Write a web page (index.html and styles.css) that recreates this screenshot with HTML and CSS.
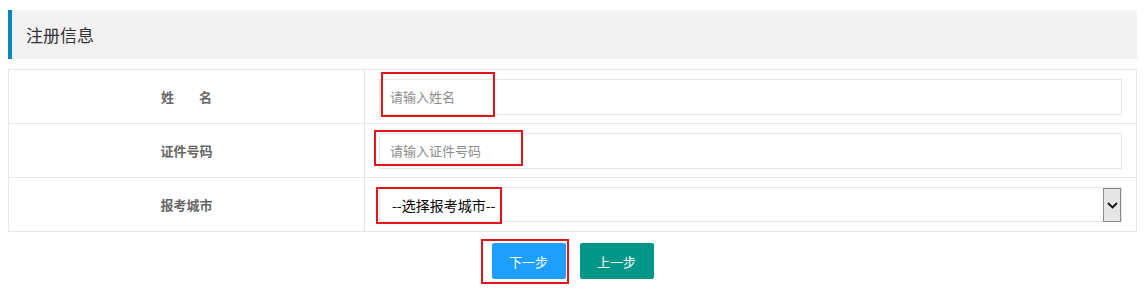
FILE: index.html
```html
<!DOCTYPE html>
<html>
<head>
  <meta charset="UTF-8">
  <title>注册信息</title>
  <link rel="stylesheet" href="styles.css">
</head>
<body>
  <div class="page">
    <div class="quote">注册信息</div>

    <table class="form-table">
      <tr>
        <th><span class="spread">姓名</span></th>
        <td>
          <input class="text-input" type="text" placeholder="请输入姓名">
          <span class="mark mark-name"></span>
        </td>
      </tr>
      <tr>
        <th>证件号码</th>
        <td>
          <input class="text-input" type="text" placeholder="请输入证件号码">
          <span class="mark mark-id"></span>
        </td>
      </tr>
      <tr>
        <th>报考城市</th>
        <td>
          <div class="select-wrap">
            <select class="city-select">
              <option>--选择报考城市--</option>
            </select>
            <span class="select-arrow">
              <svg width="11" height="7" viewBox="0 0 11 7"><path d="M1 1l4.5 4.5L10 1" fill="none" stroke="#111" stroke-width="1.8"/></svg>
            </span>
          </div>
          <span class="mark mark-city"></span>
        </td>
      </tr>
    </table>

    <div class="actions">
      <span class="btn-wrap">
        <button class="btn btn-next">下一步</button>
        <span class="mark mark-btn"></span>
      </span>
      <button class="btn btn-prev">上一步</button>
    </div>
  </div>
</body>
</html>
```

FILE: styles.css
```css
body {
  margin: 0;
  font-family: "Noto Sans CJK SC", "Liberation Sans", sans-serif;
  font-size: 13px;
  color: #666;
  background-color: #fff;
}
.page {
  padding: 10px 8px;
}
.quote {
  height: 49px;
  line-height: 49px;
  padding-left: 14px;
  border-left: 4px solid #0a86c6;
  background-color: #f2f2f2;
  color: #333;
  font-size: 17px;
  margin-bottom: 10px;
}
.form-table {
  width: 100%;
  border-collapse: collapse;
}
.form-table th,
.form-table td {
  border: 1px solid #e6e6e6;
  height: 53px;
  padding: 0;
}
.form-table th {
  width: 355px;
  font-weight: bold;
  color: #666;
  text-align: center;
}
.form-table td {
  position: relative;
  padding: 0 14px 0 14px;
}
.spread {
  letter-spacing: 25px;
  margin-right: -25px;
}
.text-input {
  display: block;
  box-sizing: border-box;
  width: 100%;
  height: 36px;
  padding: 0 10px;
  border: 1px solid #e6e6e6;
  font-family: inherit;
  font-size: 13px;
  color: #333;
  outline: none;
}
.text-input::placeholder {
  color: #8c8c8c;
}
.select-wrap {
  position: relative;
}
.city-select {
  display: block;
  box-sizing: border-box;
  width: 100%;
  height: 35px;
  padding: 0 12px;
  border: 1px solid #e6e6e6;
  background-color: #fff;
  font-family: inherit;
  font-size: 14px;
  color: #000;
  appearance: none;
  -webkit-appearance: none;
  outline: none;
}
.select-arrow {
  position: absolute;
  top: 1px;
  right: 1px;
  width: 16px;
  height: 32px;
  border: 1px solid #8a8a8a;
  background-color: #e6e6e6;
  display: flex;
  align-items: center;
  justify-content: center;
  pointer-events: none;
}
.mark {
  position: absolute;
  border: 2px solid #e3151c;
  box-sizing: border-box;
  pointer-events: none;
}
.mark-name {
  left: 16px;
  top: 2px;
  width: 114px;
  height: 45px;
}
.mark-id {
  left: 9px;
  top: 6px;
  width: 149px;
  height: 36px;
}
.mark-city {
  left: 11px;
  top: 9px;
  width: 126px;
  height: 37px;
}
.actions {
  display: flex;
  justify-content: center;
  gap: 14px;
  margin-top: 11px;
}
.btn-wrap {
  position: relative;
  display: inline-block;
}
.btn {
  display: block;
  width: 74px;
  height: 36px;
  border: none;
  border-radius: 2px;
  color: #fff;
  font-family: inherit;
  font-size: 13px;
  cursor: pointer;
}
.btn-next {
  background-color: #1e9fff;
}
.btn-prev {
  background-color: #009688;
}
.mark-btn {
  left: -11px;
  top: -4px;
  width: 88px;
  height: 45px;
}
```
